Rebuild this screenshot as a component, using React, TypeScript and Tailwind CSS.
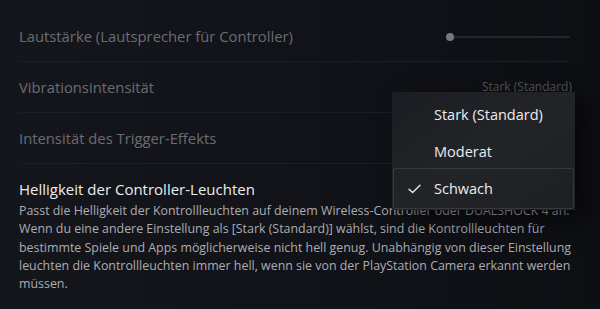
import React from 'react';

const rowText = "text-[14.8px] text-[#6a6c72]";

export default function App() {
  return (
    <div
      className="relative w-[600px] h-[309px] overflow-hidden bg-[#121319] bg-gradient-to-r from-[#15161c] via-[#121319] to-[#0e0f13]"
      style={{ fontFamily: '"Open Sans", "Noto Sans", sans-serif' }}
    >
      <div className="pl-[19px] pr-[30px]">
        {/* Volume row */}
        <div className="h-[62px] pt-[12px] flex items-center justify-between border-b border-[#1d1e24]">
          <span className={rowText}>Lautstärke (Lautsprecher für Controller)</span>
          <div className="relative w-[124px] h-[8px] flex items-center">
            <div className="w-full h-[2px] bg-[#25262b] rounded-full" />
            <div className="absolute left-0 w-[8px] h-[8px] rounded-full bg-[#76777c]" />
          </div>
        </div>

        {/* Vibration */}
        <div className="h-[51px] flex items-center justify-between border-b border-[#1d1e24]">
          <span className={rowText}>Vibrationsintensität</span>
          <span className="text-[12px] text-[#55575c] mr-[-2px]">Stark (Standard)</span>
        </div>

        {/* Trigger */}
        <div className="h-[51px] flex items-center border-b border-[#1d1e24]">
          <span className={rowText}>Intensität des Trigger-Effekts</span>
        </div>

        {/* Brightness */}
        <div className="pt-[14px]">
          <div className="text-[15px] leading-[22px] text-[#ececee]">Helligkeit der Controller-Leuchten</div>
          <p className="mt-[2px] text-[12.4px] leading-[18.3px] text-[#abadb1]">
            <span className="block whitespace-nowrap">Passt die Helligkeit der Kontrollleuchten auf deinem Wireless-Controller oder DUALSHOCK 4 an.</span>
            <span className="block whitespace-nowrap">Wenn du eine andere Einstellung als [Stark (Standard)] wählst, sind die Kontrollleuchten für</span>
            <span className="block whitespace-nowrap">bestimmte Spiele und Apps möglicherweise nicht hell genug. Unabhängig von dieser Einstellung</span>
            <span className="block whitespace-nowrap">leuchten die Kontrollleuchten immer hell, wenn sie von der PlayStation Camera erkannt werden</span>
            <span className="block whitespace-nowrap">müssen.</span>
          </p>
        </div>
      </div>

      {/* Dropdown menu */}
      <div className="absolute left-[392px] top-[92px] w-[183px] h-[118px] pt-[4px] px-[1px] bg-gradient-to-br from-[#1c1d22] via-[#232428] to-[#1e1f23] shadow-[12px_8px_24px_rgba(0,0,0,0.6)]">
        <div className="h-[37px] flex items-center pl-[41px] text-[14.5px] text-[#ececee]">Stark (Standard)</div>
        <div className="h-[37px] flex items-center pl-[41px] text-[14.5px] text-[#ececee]">Moderat</div>
        <div className="h-[41px] -mt-[2px] flex items-center border border-[#38393e] rounded-[2px] text-[14.5px] text-[#ececee]">
          <svg className="ml-[14px] mr-[13px] w-[13px] h-[10px]" viewBox="0 0 13 10" fill="none">
            <path d="M1 5.2 L4.6 8.6 L12 1.2" stroke="#e6e6e8" strokeWidth="1.4" strokeLinecap="round" strokeLinejoin="round" />
          </svg>
          <span>Schwach</span>
        </div>
      </div>
    </div>
  );
}
